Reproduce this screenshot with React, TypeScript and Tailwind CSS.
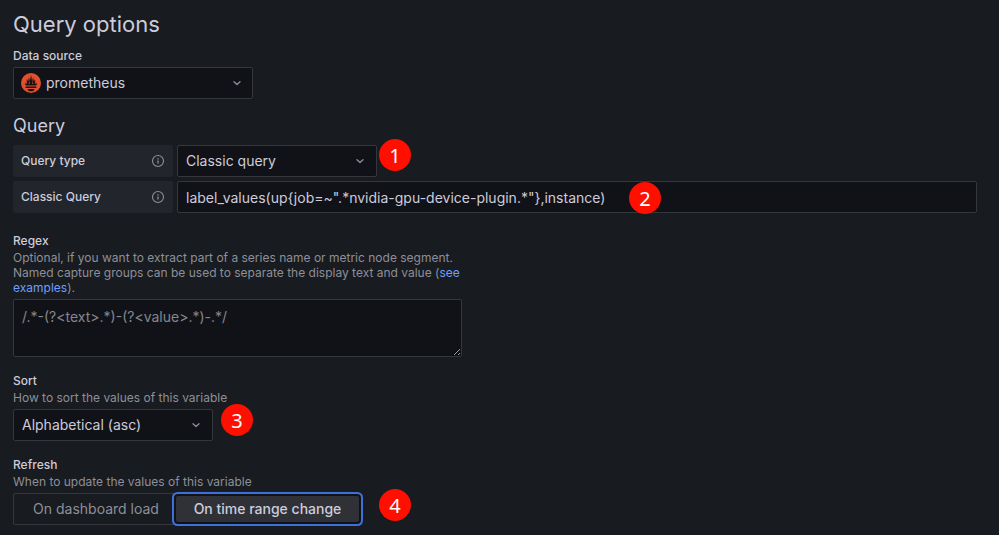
import type { ReactNode } from "react";

function Chevron({ className }: { className: string }) {
  return (
    <svg
      viewBox="0 0 16 16"
      className={`pointer-events-none absolute top-2 size-4 ${className}`}
      fill="none"
      stroke="#8e8f99"
      strokeWidth="1.3"
      strokeLinecap="round"
      strokeLinejoin="round"
      aria-hidden="true"
    >
      <path d="M5 6.7 8 9.5l3-2.800" />
    </svg>
  );
}

function InfoIcon() {
  return (
    <svg viewBox="0 0 14 14" className="size-3.5" fill="none" stroke="#8e8f98" aria-hidden="true">
      <circle cx="7" cy="7" r="5.5" strokeWidth="1.1" />
      <path d="M7 6.6v3M7 4.2v1.2" strokeWidth="1.3" />
    </svg>
  );
}

function PrometheusLogo() {
  return (
    <svg viewBox="0 0 20 20" className="pointer-events-none absolute top-1.5 left-2 size-5" aria-hidden="true">
      <circle cx="10" cy="10" r="10" fill="#e0502f" />
      <g fill="#1d1012">
        <path d="M4.800 12.600 3.700 10.200l2.500.6C5.500 9 5.500 7.300 6 5.800L7 8.800 8 4.200l.9 4.100L10 1.800l1.100 6.500 1-4.100.9 4.600 1-2.600c.5 1.500.4 3-.2 4.600l2.500-.6-1.100 2.400z" />
        <path d="M4.600 13.500h10.800v1.500H4.600zM6.500 15.900h7c-.2 1.500-1.600 2.400-3.500 2.400s-3.300-.9-3.500-2.400z" />
      </g>
      <path d="M8.300 7.600l.4 3.400h-1zM11.700 7.600l.6 3.400h-1z" fill="#e0502f" />
    </svg>
  );
}

function Badge({ children, className }: { children: ReactNode; className: string }) {
  return (
    <span
      className={`absolute flex size-8 items-center justify-center rounded-full bg-[#fe0f00] pt-0.5 font-['Noto_Sans',sans-serif] text-xl leading-none text-white ${className}`}
    >
      {children}
    </span>
  );
}

function Select({ id, value, className, pad, chevron, children }: {
  id: string;
  value: string;
  className: string;
  pad: string;
  chevron: string;
  children?: ReactNode;
}) {
  return (
    <div className={`relative ${className}`}>
      <select
        id={id}
        defaultValue={value}
        className={`block h-8 w-full appearance-none rounded-xs border border-[#36373c] bg-[#111217] text-sm text-[#ccccdc] outline-none ${pad}`}
      >
        <option value={value}>{value}</option>
      </select>
      <Chevron className={chevron} />
      {children}
    </div>
  );
}

function InlineLabel({ htmlFor, children }: { htmlFor: string; children: ReactNode }) {
  return (
    <label
      htmlFor={htmlFor}
      className="flex h-8 w-40 shrink-0 items-center justify-between rounded-xs bg-[#22252b] px-2 text-xs font-medium text-[#ccccdc]"
    >
      {children}
      <InfoIcon />
    </label>
  );
}

const labelClass = "block text-xs leading-[15px] font-medium text-[#ccccdc]";
const hintClass = "mt-0.5 mb-1 text-xs leading-[15px] text-[#8e8f99]";

export default function App() {
  return (
    <main className="min-h-screen bg-[#181b1f] pt-3 pr-[22px] pb-2.5 pl-[13px] font-[Inter,sans-serif] text-[#ccccdc]">
      <h3 className="text-[22px] leading-6">Query options</h3>

      <label htmlFor="source" className={`mt-3 ${labelClass}`}>Data source</label>
      <div className="mt-1">
        <Select id="source" value="prometheus" className="w-60" pad="pl-8" chevron="right-2">
          <PrometheusLogo />
        </Select>
      </div>

      <h4 className="mt-4 text-lg leading-[22px]">Query</h4>

      <div className="mt-2 flex flex-col gap-1">
        <div className="flex gap-1">
          <InlineLabel htmlFor="type">Query type</InlineLabel>
          <Select id="type" value="Classic query" className="w-[200px]" pad="pl-2" chevron="right-[9px]">
            <Badge className="-top-1.5 left-[202px]">1</Badge>
          </Select>
        </div>
        <div className="flex gap-1">
          <InlineLabel htmlFor="query">Classic Query</InlineLabel>
          <div className="relative flex-1">
            <input
              id="query"
              type="text"
              defaultValue={'label_values(up{job=~".*nvidia-gpu-device-plugin.*"},instance)'}
              className="block h-8 w-full rounded-xs border border-[#36373c] bg-[#111217] px-2 text-sm text-[#ccccdc] outline-none"
            />
            <Badge className="top-px left-[452px]">2</Badge>
          </div>
        </div>
      </div>

      <label htmlFor="regex" className={`mt-5 ${labelClass}`}>Regex</label>
      <p className={hintClass}>
        Optional, if you want to extract part of a series name or metric node segment.
        <br />
        Named capture groups can be used to separate the display text and value (
        <a href="#examples" className="text-[#6e9fff]">
          see
          <br />
          examples
        </a>
        ).
      </p>
      <textarea
        id="regex"
        placeholder="/.*-(?<text>.*)-(?<value>.*)-.*/"
        className="block h-[58px] w-[449px] resize rounded-xs border border-[#36373c] bg-[#111217] px-2 py-1.5 text-sm leading-[22px] text-[#ccccdc] outline-none [color-scheme:dark] placeholder:text-[#85868f]"
      />

      <label htmlFor="sort" className={`mt-4 ${labelClass}`}>Sort</label>
      <p className={hintClass}>How to sort the values of this variable</p>
      <Select id="sort" value="Alphabetical (asc)" className="w-[200px]" pad="pl-2" chevron="right-[9px]">
        <Badge className="-top-[5px] left-52">3</Badge>
      </Select>

      <fieldset className="mt-4">
        <legend className={labelClass}>Refresh</legend>
        <p className={hintClass}>When to update the values of this variable</p>
        <div className="relative flex h-8 w-[349px] rounded-xs border border-[#36373c] p-0.5 text-sm">
          <input id="load" type="radio" name="refresh" className="sr-only" />
          <label htmlFor="load" className="flex flex-1 items-center justify-center text-[#8e8f99]">
            On dashboard load
          </label>
          <input id="change" type="radio" name="refresh" defaultChecked className="sr-only" />
          <label
            htmlFor="change"
            className="flex w-[183px] items-center justify-center rounded-xs bg-[#2f3136] font-medium text-[#ccccdc] ring-2 ring-[#3d71d9] ring-offset-2 ring-offset-[#111217]"
          >
            On time range change
          </label>
          <Badge className="-top-[5px] left-[365px]">4</Badge>
        </div>
      </fieldset>
    </main>
  );
}
